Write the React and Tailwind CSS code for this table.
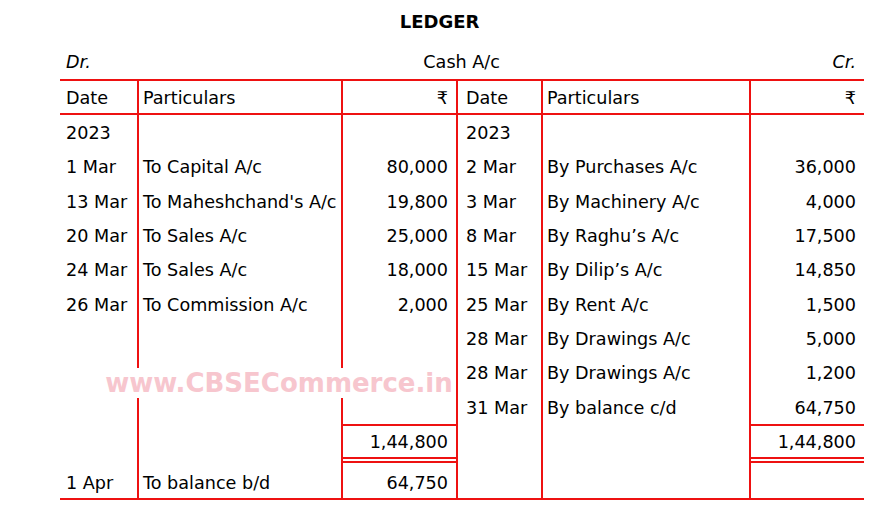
import React from 'react';

const left = [
    { date: '2023', text: '', amt: '' },
    { date: '1 Mar', text: 'To Capital A/c', amt: '80,000' },
    { date: '13 Mar', text: "To Maheshchand's A/c", amt: '19,800' },
    { date: '20 Mar', text: 'To Sales A/c', amt: '25,000' },
    { date: '24 Mar', text: 'To Sales A/c', amt: '18,000' },
    { date: '26 Mar', text: 'To Commission A/c', amt: '2,000' },
    { date: '', text: '', amt: '' },
    { date: '', text: '', amt: '' },
    { date: '', text: '', amt: '' },
];

const right = [
    { date: '2023', text: '', amt: '' },
    { date: '2 Mar', text: 'By Purchases A/c', amt: '36,000' },
    { date: '3 Mar', text: 'By Machinery A/c', amt: '4,000' },
    { date: '8 Mar', text: 'By Raghu’s A/c', amt: '17,500' },
    { date: '15 Mar', text: 'By Dilip’s A/c', amt: '14,850' },
    { date: '25 Mar', text: 'By Rent A/c', amt: '1,500' },
    { date: '28 Mar', text: 'By Drawings A/c', amt: '5,000' },
    { date: '28 Mar', text: 'By Drawings A/c', amt: '1,200' },
    { date: '31 Mar', text: 'By balance c/d', amt: '64,750' },
];

const cols = 'grid grid-cols-[77px_204px_115px_85px_208px_115px]';
const line = 'border-[#ee1111]';

const Row = ({ l, r, h = 'h-[34.33px]', pt = 'pt-[2px]' }) => (
    <div className={`${cols} ${h}`}>
        <div className={`flex items-center pl-[6px] ${pt}`}>{l.date}</div>
        <div className={`flex items-center pl-[4px] border-l-2 ${line} whitespace-nowrap ${pt}`}>{l.text}</div>
        <div className={`flex items-center justify-end pr-[8px] border-l-2 ${line} ${pt}`}>{l.amt}</div>
        <div className={`flex items-center pl-[8px] border-l-2 ${line} ${pt}`}>{r.date}</div>
        <div className={`flex items-center pl-[4px] border-l-2 ${line} whitespace-nowrap ${pt}`}>{r.text}</div>
        <div className={`flex items-center justify-end pr-[8px] border-l-2 ${line} ${pt}`}>{r.amt}</div>
    </div>
);

const App = () => {
    return (
        <div
            className="relative w-[879px] h-[506px] bg-white text-black text-[17.6px]"
            style={{ fontFamily: '"DejaVu Sans", "Noto Sans", sans-serif' }}
        >
            <div className="h-[42px] flex items-center justify-center font-bold text-[18px]">LEDGER</div>

            <div className="h-[37px] pt-[2px] ml-[60px] w-[804px] flex items-center justify-between leading-[24px]">
                <span className="italic pl-[6px]">Dr.</span>
                <span className="">Cash A/c</span>
                <span className="italic pr-[8px]">Cr.</span>
            </div>

            <div className={`ml-[60px] w-[804px] border-t-2 border-b-2 ${line}`}>
                <div className={`${cols} h-[34px] border-b-2 ${line}`}>
                    <div className="flex items-center pl-[6px] pt-[3px]">Date</div>
                    <div className={`flex items-center pl-[4px] pt-[3px] border-l-2 ${line}`}>Particulars</div>
                    <div className={`flex items-center justify-end pr-[8px] pt-[3px] border-l-2 ${line}`}>₹</div>
                    <div className={`flex items-center pl-[8px] pt-[3px] border-l-2 ${line}`}>Date</div>
                    <div className={`flex items-center pl-[4px] pt-[3px] border-l-2 ${line}`}>Particulars</div>
                    <div className={`flex items-center justify-end pr-[8px] pt-[3px] border-l-2 ${line}`}>₹</div>
                </div>

                {left.map((l, i) => (
                    <Row key={i} l={l} r={right[i]} />
                ))}

                <div className={`${cols} h-[35px]`}>
                    <div></div>
                    <div className={`border-l-2 ${line}`}></div>
                    <div className={`flex items-center justify-end pr-[8px] pt-[2px] border-l-2 border-t-2 border-b-2 ${line}`}>1,44,800</div>
                    <div className={`border-l-2 ${line}`}></div>
                    <div className={`border-l-2 ${line}`}></div>
                    <div className={`flex items-center justify-end pr-[8px] pt-[2px] border-l-2 border-t-2 border-b-2 ${line}`}>1,44,800</div>
                </div>
                <div className={`${cols} h-[4px]`}>
                    <div></div>
                    <div className={`border-l-2 ${line}`}></div>
                    <div className={`border-l-2 border-b-2 ${line}`}></div>
                    <div className={`border-l-2 ${line}`}></div>
                    <div className={`border-l-2 ${line}`}></div>
                    <div className={`border-l-2 border-b-2 ${line}`}></div>
                </div>
                <Row l={{ date: '1 Apr', text: 'To balance b/d', amt: '64,750' }} r={{ date: '', text: '', amt: '' }} h="h-[35px]" pt="pt-[5px]" />
            </div>

            {/* watermark */}
            <div
                className="absolute left-[104px] top-[368px] w-[350px] h-[30px] bg-white flex items-center justify-center font-bold text-[26px] text-[#f7c6ce] leading-none"
                style={{ fontFamily: '"DejaVu Sans", sans-serif' }}
            >
                www.CBSECommerce.in
            </div>
        </div>
    );
};

export default App;
